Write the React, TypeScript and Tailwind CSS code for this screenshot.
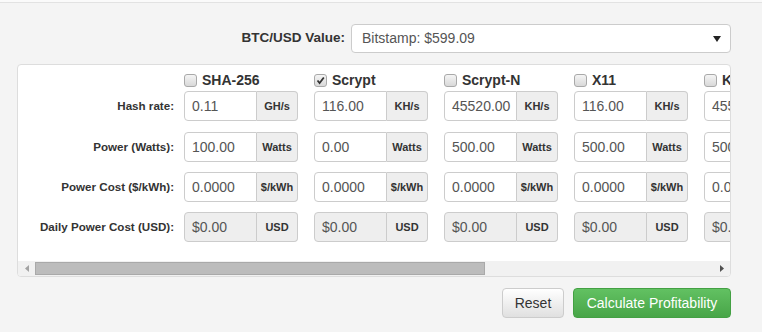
import React from "react";

type Algo = {
  name: string;
  checked: boolean;
  hash: string;
  unit: string;
  power: string;
};

const algos: Algo[] = [
  { name: "SHA-256", checked: false, hash: "0.11", unit: "GH/s", power: "100.00" },
  { name: "Scrypt", checked: true, hash: "116.00", unit: "KH/s", power: "0.00" },
  { name: "Scrypt-N", checked: false, hash: "45520.00", unit: "KH/s", power: "500.00" },
  { name: "X11", checked: false, hash: "116.00", unit: "KH/s", power: "500.00" },
  { name: "Keccak", checked: false, hash: "45520.00", unit: "KH/s", power: "500.00" },
];

function Checkbox({ checked }: { checked: boolean }) {
  return (
    <span className="flex h-[13px] w-[13px] items-center justify-center rounded-[3px] border border-[#a9a9a9] bg-gradient-to-b from-[#f4f4f4] to-[#d9d9d9]">
      {checked && (
        <svg width="9" height="9" viewBox="0 0 9 9">
          <path d="M1.5 4.5 L3.6 7 L7.8 1.5" fill="none" stroke="#333" strokeWidth="1.8" />
        </svg>
      )}
    </span>
  );
}

function InputGroup({
  value,
  addon,
  disabled,
}: {
  value: string;
  addon: string;
  disabled?: boolean;
}) {
  return (
    <div className="flex h-[30px] w-[114px] shrink-0">
      <div
        className={`flex w-[73px] items-center rounded-l-[4px] border border-[#ccc] pl-[7px] text-[14px] text-[#555] ${
          disabled ? "bg-[#eee]" : "bg-white"
        }`}
      >
        {value}
      </div>
      <div className="flex w-[41px] items-center justify-center rounded-r-[4px] border border-l-0 border-[#ccc] bg-[#eee] text-[11px] font-bold text-[#333]">
        {addon}
      </div>
    </div>
  );
}

const labelCls =
  "w-[157px] shrink-0 pr-[1px] text-right text-[11.6px] font-bold text-[#333]";

export default function App() {
  return (
    <div
      className="h-[332px] w-[762px] overflow-hidden bg-[#f4f4f4]"
      style={{ fontFamily: '"Liberation Sans", Arial, sans-serif' }}
    >
      <div className="h-[3px] border-b border-[#e2e2e2] bg-[#fafafa]" />

      <div className="ml-[17px] w-[714px]">
        {/* exchange select */}
        <div className="mt-[21px] flex items-center justify-end">
          <span className="mr-[6px] text-[13.5px] font-bold text-[#333]">
            BTC/USD Value:
          </span>
          <div className="flex h-[29px] w-[380px] items-center justify-between rounded-[4px] border border-[#ccc] bg-white pl-[10px] pr-[9px] text-[14px] text-[#555]">
            <span>Bitstamp: $599.09</span>
            <svg width="8" height="6" viewBox="0 0 8 6">
              <path d="M0 0 H8 L4 6 Z" fill="#222" />
            </svg>
          </div>
        </div>

        {/* calculator panel */}
        <div className="mt-[11px] overflow-hidden rounded-[4px] border border-[#ddd] bg-white">
          <div className="w-[712px] overflow-hidden pb-[19px] pt-[5px]">
            <div className="flex h-[21px] items-center">
              <div className="w-[166px] shrink-0" />
              <div className="flex gap-[16px]">
                {algos.map((a) => (
                  <div key={a.name} className="flex w-[114px] shrink-0 items-center gap-[5px]">
                    <Checkbox checked={a.checked} />
                    <span className="text-[14px] font-bold text-[#333]">{a.name}</span>
                  </div>
                ))}
              </div>
            </div>

            <div className="flex h-[30px] items-center">
              <div className={labelCls}>Hash rate:</div>
              <div className="ml-[9px] flex gap-[16px]">
                {algos.map((a) => (
                  <InputGroup key={a.name} value={a.hash} addon={a.unit} />
                ))}
              </div>
            </div>

            <div className="mt-[11px] flex h-[30px] items-center">
              <div className={labelCls}>Power (Watts):</div>
              <div className="ml-[9px] flex gap-[16px]">
                {algos.map((a) => (
                  <InputGroup key={a.name} value={a.power} addon="Watts" />
                ))}
              </div>
            </div>

            <div className="mt-[10px] flex h-[30px] items-center">
              <div className={labelCls}>Power Cost ($/kWh):</div>
              <div className="ml-[9px] flex gap-[16px]">
                {algos.map((a) => (
                  <InputGroup key={a.name} value="0.0000" addon="$/kWh" />
                ))}
              </div>
            </div>

            <div className="mt-[10px] flex h-[30px] items-center">
              <div className={labelCls}>Daily Power Cost (USD):</div>
              <div className="ml-[9px] flex gap-[16px]">
                {algos.map((a) => (
                  <InputGroup key={a.name} value="$0.00" addon="USD" disabled />
                ))}
              </div>
            </div>
          </div>

          {/* horizontal scrollbar */}
          <div className="flex h-[15px] items-center bg-[#f1f1f1]">
            <div className="flex w-[17px] justify-center">
              <svg width="4" height="7" viewBox="0 0 4 7">
                <path d="M4 0 V7 L0 3.5 Z" fill="#a3a3a3" />
              </svg>
            </div>
            <div className="h-[13px] w-[450px] border border-[#a9a9a9] bg-[#bcbcbc]" />
            <div className="flex-1" />
            <div className="flex w-[17px] justify-center">
              <svg width="4" height="7" viewBox="0 0 4 7">
                <path d="M0 0 V7 L4 3.5 Z" fill="#505050" />
              </svg>
            </div>
          </div>
        </div>

        {/* actions */}
        <div className="mt-[11px] flex justify-end gap-[9px]">
          <button className="h-[30px] w-[62px] rounded-[4px] border border-[#ccc] bg-gradient-to-b from-white to-[#e0e0e0] text-[14px] text-[#333]">
            Reset
          </button>
          <button className="h-[30px] w-[158px] rounded-[4px] border border-[#43a043] bg-gradient-to-b from-[#62c162] to-[#48a548] text-[14px] text-white">
            Calculate Profitability
          </button>
        </div>
      </div>
    </div>
  );
}
